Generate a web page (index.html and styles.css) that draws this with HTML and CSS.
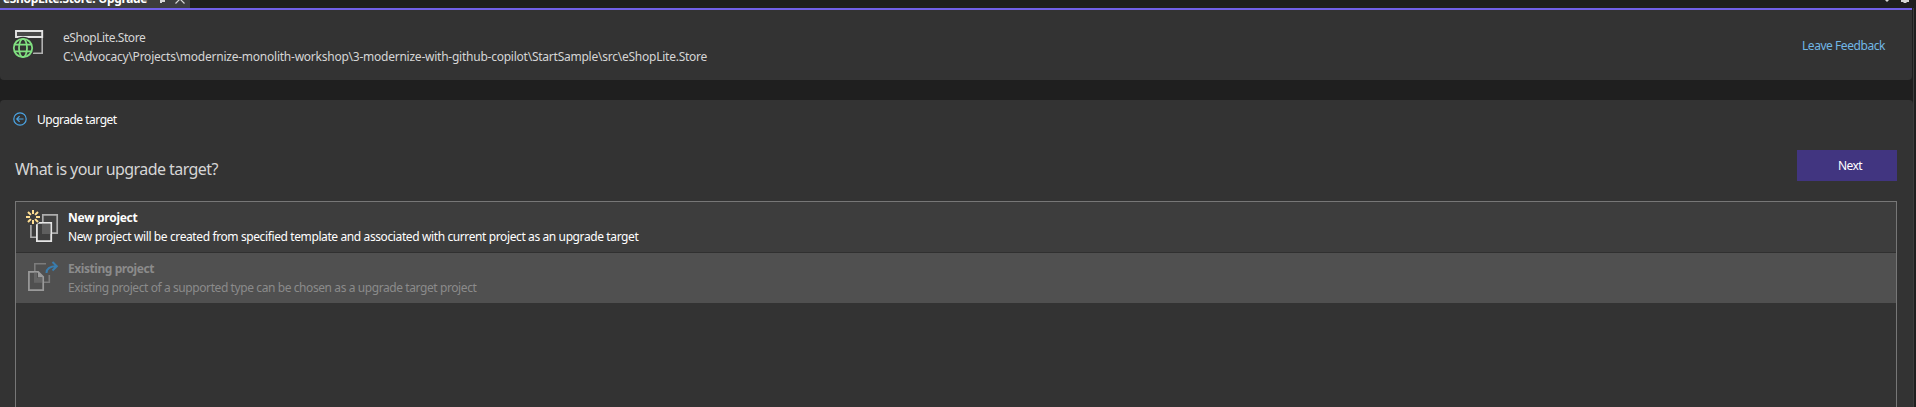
FILE: index.html
```html
<!DOCTYPE html>
<html lang="en">
<head>
<meta charset="utf-8">
<title>eShopLite.Store: Upgrade</title>
<link rel="stylesheet" href="styles.css">
</head>
<body>
<div class="window">
  <div class="tabs">
    <div class="tab">
      <span class="tab-title">eShopLite.Store: Upgrade</span>
      <svg class="tab-icons" width="30" height="8" viewBox="0 0 30 8"><path d="M3 0h5v2H5v1H3z" fill="#d6d6d6"/><path d="M18.500 3.500l4.500-4.500 4.500 4.500" fill="none" stroke="#d6d6d6" stroke-width="1.200"/></svg>
    </div>
    <svg class="tab-tools" width="30" height="8" viewBox="0 0 30 8"><path d="M2 0h4L4 2z" fill="#d6d6d6"/><path d="M18 0h8v2h-2l-1 1h-2l-1-1h-2z" fill="#d6d6d6"/></svg>
  </div>
  <main class="content">
    <header class="project">
      <svg class="project-icon" width="32" height="32" viewBox="0 0 32 32">
        <path d="M4 3h26.200v6H4z" fill="#484848" stroke="#e4e4e4" stroke-width="1.900"/>
        <path d="M30.200 10v15.200H21" fill="none" stroke="#b0b0b0" stroke-width="1.600"/>
        <circle cx="11" cy="20" r="11.300" fill="#333"/>
        <g fill="none" stroke="#80df80" stroke-width="1.800"><circle cx="11" cy="20" r="9.200"/><ellipse cx="11" cy="20" rx="4" ry="9.200"/><path d="M2.500 16.700h17M2.500 23.300h17"/></g>
      </svg>
      <div class="project-text">
        <div class="line name">eShopLite.Store</div>
        <div class="line path">C:\Advocacy\Projects\modernize-monolith-workshop\3-modernize-with-github-copilot\StartSample\src\eShopLite.Store</div>
      </div>
      <a class="feedback">Leave Feedback</a>
    </header>
    <section class="panel">
      <div class="crumb">
        <svg width="14" height="14" viewBox="0 0 14 14" fill="none" stroke="#4ba5e5" stroke-width="1.200"><circle cx="7" cy="7" r="6.200"/><path d="M10.500 7H4M6.600 4.200L3.800 7l2.800 2.800"/></svg>
        <span class="crumb-text">Upgrade target</span>
      </div>
      <div class="question">
        <h1>What is your upgrade target?</h1>
        <button>Next</button>
      </div>
      <div class="list">
        <div class="row">
          <svg width="34" height="34" viewBox="0 0 34 34">
            <path d="M17.800 4.900h14.400v18.300H17.800z" fill="#424242" stroke="#adadad" stroke-width="1.700"/>
            <path d="M5.900 15v12.300H11" fill="none" stroke="#adadad" stroke-width="1.600"/>
            <path d="M11.900 12.900h14.300v18.300H11.900z" fill="#3f3f3f" stroke="#e6e6e6" stroke-width="1.800"/>
            <path d="M17 13.800h8.300v10.200H17z" fill="#5e5e5e"/>
            <circle cx="8" cy="7" r="8" fill="#3d3d3d"/>
            <g stroke="#ffdf94" stroke-width="2"><path d="M8 0v4M8 10v4M1 7h4M11 7h4M3 2l2.900 2.900M10.100 9.100L13 12M13 2l-2.900 2.900M5.900 9.100L3 12"/></g>
          </svg>
          <div class="row-text"><div class="line title new">New project</div><div class="line desc-new">New project will be created from specified template and associated with current project as an upgrade target</div></div>
        </div>
        <div class="row disabled">
          <svg width="34" height="34" viewBox="0 0 34 34">
            <path d="M9.800 14V6.800H21M9.800 14v11.300h14.500V18" fill="none" stroke="#7c7c7c" stroke-width="1.600"/>
            <path d="M3.900 14.800h9.300l5 5v13.300H3.900z" fill="#505050" stroke="#9a9a9a" stroke-width="1.700"/>
            <path d="M9 15.700h3v5h5v5H9z" fill="#656565"/><path d="M13 14.800l5.200 5.500H13z" fill="#9a9a9a"/>
            <path d="M21.500 16c0-4.800 3-6.800 10-6.800M27.500 5l4.300 4.200-4.300 4.300" fill="none" stroke="#397cad" stroke-width="2"/>
          </svg>
          <div class="row-text"><div class="line title old">Existing project</div><div class="line desc-old">Existing project of a supported type can be chosen as a upgrade target project</div></div>
        </div>
      </div>
    </section>
  </main>
</div>
</body>
</html>
```
FILE: styles.css
```css
* { box-sizing: border-box; }
body { margin: 0; background: #1f1f1f; font: 12px/19px "Noto Sans", "Open Sans", sans-serif; color: #d6d6d6; overflow: hidden; }
.window { height: 407px; display: flex; flex-direction: column; padding-right: 2px; }
.tabs { height: 8px; flex: none; display: flex; justify-content: space-between; overflow: hidden; padding-right: 1px; }
.tab { width: 190px; background: #3d3d3d; display: flex; padding-left: 3px; }
.tab-title { width: 154px; margin-top: -10px; height: 18px; line-height: 18px; font-weight: bold; letter-spacing: -0.33px; color: #fff; white-space: nowrap; }
.tab-icons { flex: none; }
.tab-tools { flex: none; }
.content { flex: 1; display: flex; flex-direction: column; gap: 20px; border-right: 1px solid #3d3d3d; }
.project { height: 72px; flex: none; margin-right: 1px; background: #333; border-top: 2px solid #7160e8; border-radius: 0 0 4px 4px; display: flex; padding: 18px 27px 0 12px; }
.project-icon { flex: none; }
.project-text { flex: 1; padding-left: 19px; }
.line { white-space: nowrap; }
.name { letter-spacing: -0.43px; }
.path { letter-spacing: -0.24px; }
.feedback { color: #71b7e6; margin-top: 8px; white-space: nowrap; letter-spacing: -0.44px; }
.panel { flex: 1; background: #333; border-radius: 4px 4px 0 0; display: flex; flex-direction: column; padding: 0 16px 0 15px; }
.crumb { height: 50px; flex: none; display: flex; gap: 9px; color: #fff; padding-top: 10px; margin-left: -2px; }
.crumb svg { margin-top: 2px; flex: none; }
.crumb-text { letter-spacing: -0.5px; padding-left: 1px; }
.question { height: 51px; flex: none; display: flex; justify-content: space-between; align-items: flex-start; }
h1 { margin: 6px 0 0; font-size: 16px; font-weight: 400; line-height: 26px; letter-spacing: -0.57px; white-space: nowrap; }
button { width: 100px; height: 31px; border: 0; padding: 0 0 0 6px; background: #413580; color: #fff; font: inherit; letter-spacing: -0.6px; }
.list { flex: 1; border: 1px solid #777; border-bottom: 0; }
.row { height: 51px; display: flex; padding: 8px 10px 0 9px; background: #3d3d3d; color: #fff; border-bottom: 1px solid #303030; }
.row svg { flex: none; overflow: visible; }
.row-text { padding-left: 9px; margin-top: -2px; }
.title { font-weight: bold; }
.new { letter-spacing: -0.27px; }
.old { letter-spacing: -0.43px; }
.desc-new { letter-spacing: -0.39px; }
.desc-old { letter-spacing: -0.41px; }
.disabled { height: 50px; background: #505050; color: #8b8b8b; border: 0; }
.disabled svg { margin-top: -4px; }
```
